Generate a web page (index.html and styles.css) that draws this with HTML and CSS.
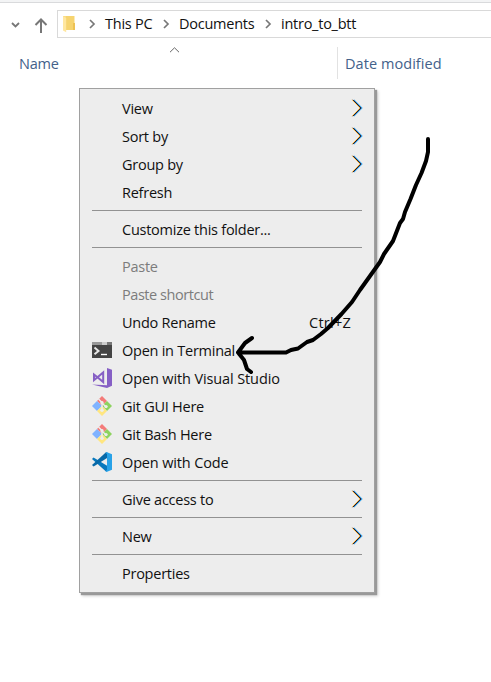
FILE: index.html
```html
<!DOCTYPE html>
<html lang="en">
<head>
<meta charset="utf-8">
<title>intro_to_btt</title>
<link rel="stylesheet" href="styles.css">
</head>
<body>
<svg width="0" height="0" class="defs" aria-hidden="true">
  <symbol id="sub" viewBox="0 0 12 18">
    <g fill="none" stroke-width="1"><path d="M1 .8 9 9 1 17.2" stroke="#ffc14a"/><path d="M2.8.8 10.8 9l-8 8.2" stroke="#2a9fe8" stroke-width="1.2"/><path d="M1.9.8 9.9 9l-8 8.2" stroke="#2a1424" stroke-width="1"/></g>
  </symbol>
  <symbol id="git" viewBox="0 0 20 20">
    <path d="M10 0 15 5 10 10 5 5z" fill="#f47b79"/><path d="M5 5 10 10 5 15 0 10z" fill="#80b3ff"/><path d="M15 5 20 10 15 15 10 10z" fill="#8dd35f"/><path d="M10 10 15 15 10 20 5 15z" fill="#ffe680"/>
    <path d="M6.5 3 10 6.5V15M10 7l4 4" fill="none" stroke="#ededed" stroke-width="1.4"/><circle cx="10" cy="6.8" r="1.7" fill="#ededed"/><circle cx="10" cy="14.3" r="1.7" fill="#ededed"/><circle cx="14" cy="10.6" r="1.7" fill="#ededed"/>
  </symbol>
</svg>
<header class="address-row">
  <svg class="nav" width="57" height="30" viewBox="0 0 57 30" fill="none" stroke="#777" stroke-width="2"><path d="m12 13 3.5 3.5L19 13" stroke-width="1.8"/><path d="M41 23V9.5M35.5 15 41 9.5l5.5 5.5"/></svg>
  <nav class="address">
    <svg class="folder" width="14" height="18" viewBox="0 0 14 18"><path d="M0 1h4v14H0z" fill="#f9dc86"/><path d="M3 1h8.5v14H3z" fill="#f6d470"/><path d="M10 8h2v7h-2z" fill="#edc253"/><path d="M0 1.3 3.2 3v14.2L0 15.5z" fill="#ffe7a0"/></svg>
    <svg class="crumb" width="7" height="10" viewBox="0 0 7 10"><path d="m1 1 4 4-4 4"/></svg>
    <span class="c1">This PC</span>
    <svg class="crumb" width="7" height="10" viewBox="0 0 7 10"><path d="m1 1 4 4-4 4"/></svg>
    <span class="c2">Documents</span>
    <svg class="crumb" width="7" height="10" viewBox="0 0 7 10"><path d="m1 1 4 4-4 4"/></svg>
    <span class="c3">intro_to_btt</span>
  </nav>
</header>
<div class="columns">
  <div class="col-name">Name<svg class="sort" width="11" height="6" viewBox="0 0 11 6"><path d="M1 5.2 5.5.8 10 5.2" fill="none" stroke="#666"/></svg></div>
  <div class="col-date">Date modified</div>
</div>
<div class="menu">
  <div class="item"><i></i><span>View</span><svg class="arrow"><use href="#sub"/></svg></div>
  <div class="item"><i></i><span>Sort by</span><svg class="arrow"><use href="#sub"/></svg></div>
  <div class="item"><i></i><span>Group by</span><svg class="arrow"><use href="#sub"/></svg></div>
  <div class="item"><i></i><span>Refresh</span></div>
  <hr>
  <div class="item"><i></i><span>Customize this folder...</span></div>
  <hr>
  <div class="item off"><i></i><span>Paste</span></div>
  <div class="item off"><i></i><span class="shortcut">Paste shortcut</span></div>
  <div class="item"><i></i><span>Undo Rename</span><span class="key">Ctrl+Z</span></div>
  <div class="item"><i><svg width="20" height="20" viewBox="0 0 20 20"><path d="M0 2h20v16H0z" fill="#444"/><path d="M0 2h20v3H0z" fill="#777"/><path d="M0 2h10v3H0z" fill="#999"/><path d="M10 2h5v3h-5z" fill="#ccc"/><path d="m2.5 7.5 4 3.4-4 3.4" fill="none" stroke="#e8e8e8" stroke-width="2"/><path d="M9 14.5h6" stroke="#fff" stroke-width="1.4"/></svg></i><span>Open in Terminal</span></div>
  <div class="item"><i><svg width="20" height="20" viewBox="0 0 20 20"><path d="M15 0 20 1.8V17.8L15 20 0 16.5 15 17.3z" fill="#865fc5"/><path d="M2 6.5v5.6L5.5 9.3zM5.5 9.3l5.7-4.8v9.6z" fill="none" stroke="#865fc5" stroke-width="2"/></svg></i><span class="studio">Open with Visual Studio</span></div>
  <div class="item"><i><svg width="20" height="20"><use href="#git"/></svg></i><span>Git GUI Here</span></div>
  <div class="item"><i><svg width="20" height="20"><use href="#git"/></svg></i><span>Git Bash Here</span></div>
  <div class="item"><i><svg width="20" height="20" viewBox="0 0 20 20"><path d="M1.5 5.5 0 7l14 12.5 1.5-.5v-5z" fill="#0878bd"/><path d="M0 13 14 .3l1.5.5v5L1.6 14.5z" fill="#0869a8"/><path d="M14.5 0 20 2.3v15.4L14.5 20l-1-1 1.5-1V2l-1.5-1z" fill="#28a2e8"/></svg></i><span class="code">Open with Code</span></div>
  <hr>
  <div class="item"><i></i><span>Give access to</span><svg class="arrow"><use href="#sub"/></svg></div>
  <hr>
  <div class="item"><i></i><span>New</span><svg class="arrow"><use href="#sub"/></svg></div>
  <hr>
  <div class="item"><i></i><span>Properties</span></div>
</div>
<svg class="ink" width="491" height="682" viewBox="0 0 491 682"><path d="M428 139V152L426 161 421.500 173 416 185 410.500 199 405 212 403 219 400 223 393 241 384 254 380 262 375 269 360 290 352 302 341.500 314 328 328 321 334 313 340 307 342 298 348.500 291 350 286 352.500H238M252 338 245 343 238 352.500 244 360 247 369 251 372"/></svg>
</body>
</html>
```
FILE: styles.css
```css
body {
  margin: 0;
  width: 491px;
  height: 682px;
  overflow: hidden;
  position: relative;
  background: #fff;
  border-top: 2px solid #f3f4f5;
  box-sizing: border-box;
  font: 14.5px/28px "Open Sans", "Noto Sans", sans-serif;
  letter-spacing: -0.25px;
  color: #111;
}
.defs { position: absolute; }
.address-row {
  display: flex;
  border-top: 1px solid #d9dadc;
  padding-top: 7px;
}
.address {
  flex: 1;
  display: flex;
  align-items: center;
  height: 26px;
  border: 1px solid #d9d9d9;
  border-right: 0;
  padding-left: 5px;
}
.folder { margin-right: 12px; }
.crumb { margin-right: 9px; fill: none; stroke: #777; stroke-width: 1.7; }
.c1 { width: 58px; }
.c2 { width: 86px; }
.address span { white-space: nowrap; }
.columns {
  display: flex;
  margin-top: 7px;
  height: 32px;
  line-height: 33px;
  color: #43618a;
}
.col-name {
  position: relative;
  box-sizing: border-box;
  width: 338px;
  padding-left: 19px;
  border-right: 1px solid #e2e2e2;
}
.sort { position: absolute; left: 169px; top: 0; }
.col-date { padding-left: 7px; letter-spacing: 0.06px; }
.menu {
  position: absolute;
  left: 79px;
  top: 86px;
  width: 296px;
  height: 505px;
  box-sizing: border-box;
  padding: 5px 12px;
  border: 1px solid #a0a0a0;
  background: #ededed;
  box-shadow: 2px 2px 1px #999, 3px 3px 3px #ccc;
}
.item { display: flex; height: 28px; align-items: center; white-space: nowrap; }
.item span { padding-top: 2px; }
.item i { width: 30px; height: 20px; }
.item i svg { display: block; }
.off { color: #7c7c7c; }
.shortcut { letter-spacing: -0.45px; }
.studio { letter-spacing: -0.12px; }
.code { letter-spacing: -0.15px; }
.arrow { width: 12px; height: 18px; margin: 0 -1px 1px auto; }
.menu .key { margin-left: auto; margin-right: 11px; letter-spacing: 0.25px; }
.menu hr { margin: 4px 0; border: 0; height: 1px; background: #929292; }
.ink {
  position: absolute;
  left: 0;
  top: -2px;
  fill: none;
  stroke: #000;
  stroke-width: 4;
  stroke-linecap: round;
  stroke-linejoin: round;
}
```
